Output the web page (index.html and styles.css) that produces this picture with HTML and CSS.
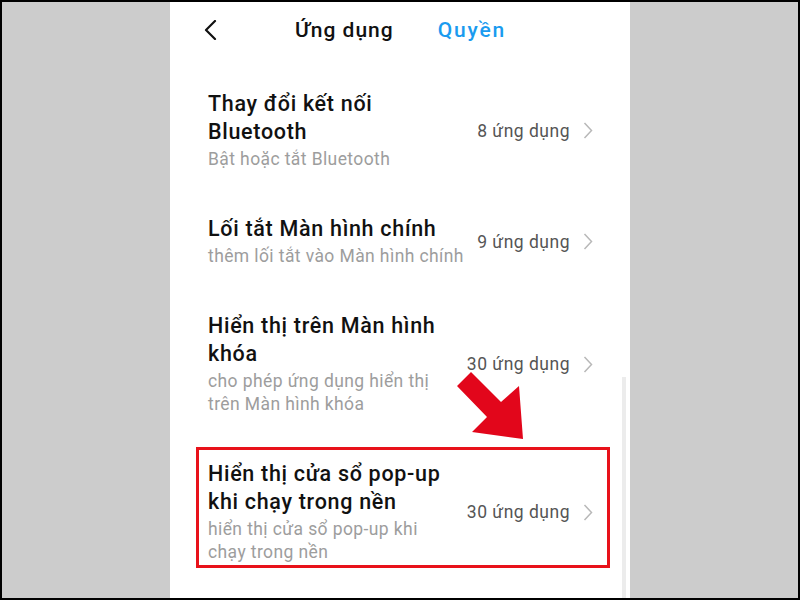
FILE: index.html
```html
<!DOCTYPE html>
<html lang="vi">
<head>
    <meta charset="UTF-8">
    <meta name="viewport" content="width=device-width, initial-scale=1.0">
    <title>Quyền ứng dụng</title>
    <link rel="stylesheet" href="styles.css">
</head>
<body>
    <div class="screen">
        <div class="panel">
            <div class="header">
                <svg class="back" width="14" height="20" viewBox="0 0 14 20">
                    <path d="M12 1 L3 10 L12 19" fill="none" stroke="#111" stroke-width="2.2" stroke-linecap="round" stroke-linejoin="round"/>
                </svg>
                <span class="tab">Ứng dụng</span>
                <span class="tab tab-active">Quyền</span>
            </div>

            <div class="list">
                <div class="item">
                    <div class="item-text">
                        <div class="item-title">Thay đổi kết nối Bluetooth</div>
                        <div class="item-sub">Bật hoặc tắt Bluetooth</div>
                    </div>
                    <div class="item-meta">
                        <span>8 ứng dụng</span>
                        <svg width="10" height="17" viewBox="0 0 10 17"><path d="M1.5 1 L8.5 8.5 L1.5 16" fill="none" stroke="#b8b8b8" stroke-width="1.5"/></svg>
                    </div>
                </div>

                <div class="item">
                    <div class="item-text">
                        <div class="item-title">Lối tắt Màn hình chính</div>
                        <div class="item-sub">thêm lối tắt vào Màn hình chính</div>
                    </div>
                    <div class="item-meta">
                        <span>9 ứng dụng</span>
                        <svg width="10" height="17" viewBox="0 0 10 17"><path d="M1.5 1 L8.5 8.5 L1.5 16" fill="none" stroke="#b8b8b8" stroke-width="1.5"/></svg>
                    </div>
                </div>

                <div class="item">
                    <div class="item-text">
                        <div class="item-title">Hiển thị trên Màn hình khóa</div>
                        <div class="item-sub">cho phép ứng dụng hiển thị trên Màn hình khóa</div>
                    </div>
                    <div class="item-meta">
                        <span>30 ứng dụng</span>
                        <svg width="10" height="17" viewBox="0 0 10 17"><path d="M1.5 1 L8.5 8.5 L1.5 16" fill="none" stroke="#b8b8b8" stroke-width="1.5"/></svg>
                    </div>
                </div>

                <div class="item highlight">
                    <div class="item-text">
                        <div class="item-title">Hiển thị cửa sổ pop-up khi chạy trong nền</div>
                        <div class="item-sub">hiển thị cửa sổ pop-up khi chạy trong nền</div>
                    </div>
                    <div class="item-meta">
                        <span>30 ứng dụng</span>
                        <svg width="10" height="17" viewBox="0 0 10 17"><path d="M1.5 1 L8.5 8.5 L1.5 16" fill="none" stroke="#b8b8b8" stroke-width="1.5"/></svg>
                    </div>
                </div>
            </div>

            <!-- annotation arrow -->
            <svg class="arrow" width="72" height="74" viewBox="455 370 72 74">
                <polygon points="457,386 471,372 501,402 519,386 523,439 472,432 487,417" fill="#e2061b"/>
            </svg>

            <div class="scrollbar"></div>
        </div>
    </div>
</body>
</html>
```

FILE: styles.css
```css
body {
    margin: 0;
    background: #000;
    font-family: Roboto, "Noto Sans", "DejaVu Sans", sans-serif;
}

.screen {
    width: 796px;
    height: 596px;
    margin: 2px;
    background: #cccccc;
    display: flex;
    justify-content: center;
}

.panel {
    position: relative;
    width: 460px;
    height: 596px;
    background: #fff;
    overflow: hidden;
}

.header {
    display: flex;
    align-items: center;
    height: 56px;
    padding-left: 33px;
}

.back {
    margin-right: 78px;
}

.tab {
    font-size: 21px;
    font-weight: 500;
    letter-spacing: 1px;
    color: #111;
    margin-right: 44px;
}

.tab-active {
    color: #1a9bef;
    letter-spacing: 1.8px;
}

.list {
    padding-top: 10px;
}

.item {
    position: relative;
    display: flex;
    align-items: center;
    padding: 22px 37px 22px 38px;
}

.item-text {
    flex: 1;
}

.item-title {
    font-size: 21.5px;
    font-weight: 500;
    letter-spacing: 0.7px;
    line-height: 28px;
    color: #111;
}

.item-sub {
    margin-top: 2px;
    font-size: 17.5px;
    letter-spacing: 0.4px;
    line-height: 23px;
    color: #9d9d9d;
}

.item-meta {
    flex: none;
    margin-left: 10px;
    display: flex;
    align-items: center;
    gap: 13px;
    font-size: 17.5px;
    letter-spacing: 0.5px;
    color: #555;
}

.highlight::after {
    content: "";
    position: absolute;
    top: 9px;
    left: 26px;
    right: 20px;
    bottom: 18px;
    border: 3px solid #e8121a;
}

.arrow {
    position: absolute;
    left: 285px;
    top: 368px;
}

.scrollbar {
    position: absolute;
    top: 375px;
    bottom: 0;
    right: 4px;
    width: 4px;
    background: #ececec;
}
```
